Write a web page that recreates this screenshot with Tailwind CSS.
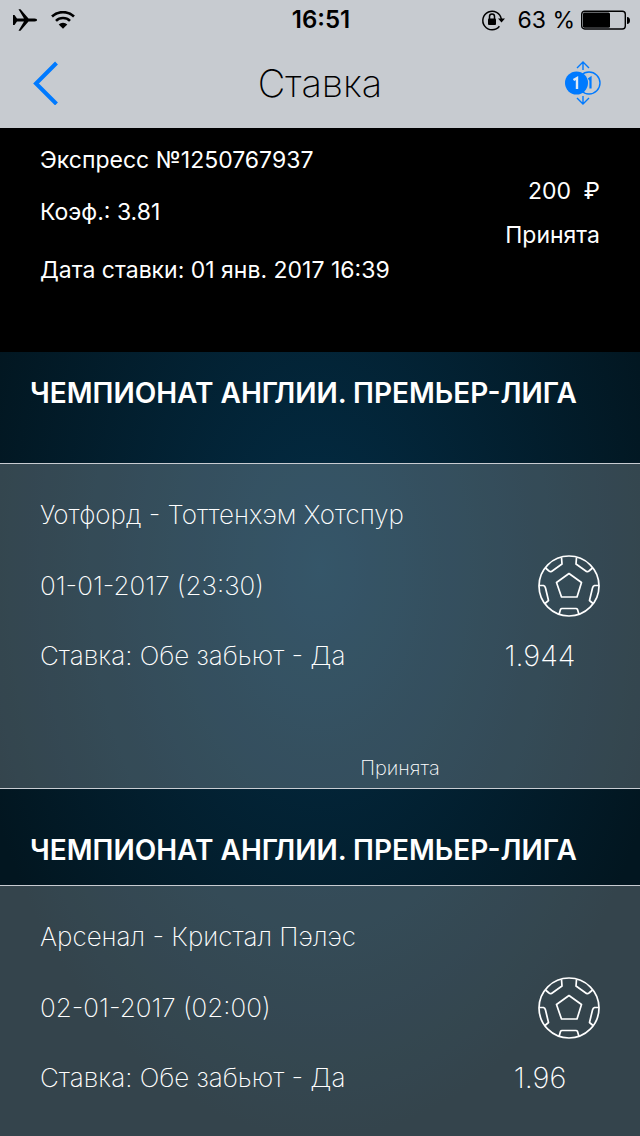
<!DOCTYPE html>
<html lang="ru">

<head>
    <meta charset="UTF-8">
    <meta name="viewport" content="width=device-width, initial-scale=1.0">
    <title>Ставка</title>
    <script src="https://cdn.jsdelivr.net/npm/@tailwindcss/browser@4"></script>
</head>

<body class="min-h-screen flex flex-col font-['Inter','Liberation_Sans',sans-serif] text-white bg-[radial-gradient(ellipse_360px_570px_at_50%_50%,#032c44,#021620)]">
    <header class="bg-[#c7cbd0] text-black">
        <!-- Status bar -->
        <div class="grid grid-cols-3 items-center h-10 pl-3 pr-2.5">
            <div class="flex items-center gap-3.5">
                <svg class="w-[25px] h-6" viewBox="0 0 25 24" fill="currentColor">
                    <path d="M1 7h1.500l2.500 3.600h7L6.500 1.200h2L16.500 10.600h6c2 0 2.500.8 2.500 1.400s-.5 1.400-2.500 1.400h-6L8.500 22.800h-2l5.500-9.400H5L2.500 17H1z" />
                </svg>
                <svg class="w-6 h-[18px]" viewBox="0 0 24 18" fill="none" stroke="currentColor" stroke-width="2.600">
                    <path d="M1 5.500a16 16 0 0 1 22 0" />
                    <path d="M5 9.900a10 10 0 0 1 14 0" />
                    <path d="M12 17.800l-4.300-4.300a6.200 6.200 0 0 1 8.600 0z" fill="currentColor" stroke="none" />
                </svg>
            </div>
            <span class="text-center text-2xl font-semibold">16:51</span>
            <div class="flex items-center justify-end">
                <svg class="w-6 h-[22px] mr-3" viewBox="0 0 24 22" fill="none" stroke="currentColor" stroke-width="1.500">
                    <path d="M18.400 17.300A9.300 9.300 0 1 1 20.300 10" />
                    <path d="M17 9.500h7l-3.500 4z" fill="currentColor" stroke="none" />
                    <rect x="7" y="9.500" width="8" height="6.500" rx="1" fill="currentColor" stroke="none" />
                    <path d="M8.500 10V7.500a2.500 2.500 0 0 1 5 0V10" />
                </svg>
                <span class="text-[23px] whitespace-nowrap mr-1.5">63 %</span>
                <svg class="w-[49px] h-5 shrink-0" viewBox="0 0 49 20">
                    <rect x=".7" y="1.200" width="43.600" height="17.800" rx="3" fill="none" stroke="currentColor" stroke-width="1.400" />
                    <rect x="2" y="2.500" width="27" height="15.200" rx="1.500" />
                    <path d="M46 7c2 0 3 1.500 3 3.500s-1 3.500-3 3.500z" />
                </svg>
            </div>
        </div>

        <!-- Navigation bar -->
        <nav class="grid grid-cols-3 items-center h-22 px-8 pb-0.5 text-[#007aff]">
            <button type="button" aria-label="Назад" class="justify-self-start">
                <svg class="w-[27px] h-11" viewBox="0 0 27 44" fill="none" stroke="currentColor" stroke-width="4">
                    <path d="M24.500 2L4 22.500 24.500 43" />
                </svg>
            </button>
            <h1 class="text-center text-[38px] font-extralight text-black">Ставка</h1>
            <button type="button" aria-label="Купоны" class="justify-self-end mr-[7px]">
                <svg class="w-9 h-11" viewBox="0 0 36 44" fill="none" stroke="currentColor" stroke-width="1.400">
                    <path d="M18 9V1.200M12 7l6-6 6 6M18 35v7.800M12 37l6 6 6-6" />
                    <circle cx="24" cy="22" r="11" />
                    <circle cx="11.500" cy="22" r="11.500" fill="currentColor" stroke="none" />
                    <path d="M23.500 18.500l2-1.500V27.500" stroke-width="2.200" />
                    <path d="M8.500 19l3.500-2V28" stroke="#dfeaf5" stroke-width="2.400" />
                </svg>
            </button>
        </nav>
    </header>

    <!-- Bet summary -->
    <section class="flex justify-between h-56 px-10 pt-4 bg-black text-[23px] leading-8">
        <div>
            <p>Экспресс №1250767937</p>
            <p class="mt-5">Коэф.: 3.81</p>
            <p class="mt-[26px]">Дата ставки: 01 янв. 2017 16:39</p>
        </div>
        <div class="text-right pt-[31px]">
            <p>200 &nbsp;₽</p>
            <p class="mt-3">Принята</p>
        </div>
    </section>

    <!-- Events -->
    <h2 class="h-[111px] pl-[30px] pt-[25px] text-[28px] leading-8 font-semibold">ЧЕМПИОНАТ АНГЛИИ. ПРЕМЬЕР-ЛИГА</h2>
    <article class="h-[326px] border-y border-[#c8ccd2] bg-white/20 px-10 pt-[35px] text-[26px] leading-8 font-extralight">
        <p>Уотфорд - Тоттенхэм Хотспур</p>
        <div class="flex items-center justify-between mt-6">
            <time datetime="2017-01-01T23:30">01-01-2017 (23:30)</time>
            <svg class="w-[62px] h-[62px]" viewBox="0 0 62 62" fill="none" stroke="currentColor" stroke-width="1.700" stroke-linejoin="round">
                <circle cx="31" cy="31" r="30" />
                <path d="M31 18.500L43.500 27.500 39 42H23.500L18.500 27.500z" />
                <path d="M23.500 2.500l.5 6.500L13.500 16.500Q12 17 11 16L7.500 13" />
                <path d="M38.500 2.500l-.5 6.500L48.500 16.500Q50 17 51 16L54.500 13" />
                <path d="M1 30.500h4.500Q7 31 7.500 33l3 12.500L7 48.500" />
                <path d="M61 30.500h-4.500Q55 31 54.500 33l-3 12.500L55 48.500" />
                <path d="M21 59.500l1.500-5Q23 53.500 24 53.500H38Q39 53.500 39.500 54.500l1.500 5" />
            </svg>
        </div>
        <div class="flex justify-between mt-[23px]">
            <p>Ставка: Обе забьют - Да</p>
            <p class="w-30 text-center text-[29px]">1.944</p>
        </div>
        <p class="mt-20 pl-40 text-center text-xl leading-8">Принята</p>
    </article>

    <h2 class="h-24 pl-[30px] pt-[45px] text-[28px] leading-8 font-semibold">ЧЕМПИОНАТ АНГЛИИ. ПРЕМЬЕР-ЛИГА</h2>
    <article class="grow border-t border-[#c8ccd2] bg-white/20 px-10 pt-[35px] text-[26px] leading-8 font-extralight">
        <p>Арсенал - Кристал Пэлэс</p>
        <div class="flex items-center justify-between mt-6">
            <time datetime="2017-01-02T02:00">02-01-2017 (02:00)</time>
            <svg class="w-[62px] h-[62px]" viewBox="0 0 62 62" fill="none" stroke="currentColor" stroke-width="1.700" stroke-linejoin="round">
                <circle cx="31" cy="31" r="30" />
                <path d="M31 18.500L43.500 27.500 39 42H23.500L18.500 27.500z" />
                <path d="M23.500 2.500l.5 6.500L13.500 16.500Q12 17 11 16L7.500 13" />
                <path d="M38.500 2.500l-.5 6.500L48.500 16.500Q50 17 51 16L54.500 13" />
                <path d="M1 30.500h4.500Q7 31 7.500 33l3 12.500L7 48.500" />
                <path d="M61 30.500h-4.500Q55 31 54.500 33l-3 12.500L55 48.500" />
                <path d="M21 59.500l1.500-5Q23 53.500 24 53.500H38Q39 53.500 39.500 54.500l1.500 5" />
            </svg>
        </div>
        <div class="flex justify-between mt-[23px]">
            <p>Ставка: Обе забьют - Да</p>
            <p class="w-30 text-center text-[29px]">1.96</p>
        </div>
    </article>
</body>

</html>
